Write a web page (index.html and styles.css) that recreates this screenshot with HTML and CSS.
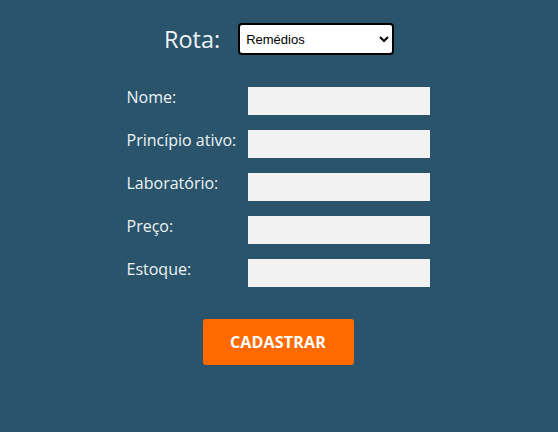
FILE: index.html
```html
<!DOCTYPE html>
<html lang="pt">
<head>
<meta charset="utf-8">
<link rel="stylesheet" href="styles.css">
</head>
<body>
<main class="page">
  <div class="route">
    <label class="route-label" for="rota">Rota:</label>
    <select id="rota" class="route-select">
      <option>Remédios</option>
    </select>
  </div>
  <form class="form">
    <div class="fields">
      <label class="field-label">Nome:</label><input class="field-input" type="text">
      <label class="field-label">Princípio ativo:</label><input class="field-input" type="text">
      <label class="field-label">Laboratório:</label><input class="field-input" type="text">
      <label class="field-label">Preço:</label><input class="field-input" type="text">
      <label class="field-label">Estoque:</label><input class="field-input" type="text">
    </div>
    <button class="submit" type="button">CADASTRAR</button>
  </form>
</main>
</body>
</html>
```
FILE: styles.css
```css
html, body {
  margin: 0;
  padding: 0;
  background: #2a546b;
  height: 100%;
}
body {
  font-family: "Open Sans", "DejaVu Sans", sans-serif;
  color: #f2f2f2;
}
.page {
  display: flex;
  flex-direction: column;
  align-items: center;
  padding-top: 23px;
}
.route {
  display: flex;
  align-items: center;
  gap: 18px;
}
.route-label {
  font-size: 23.5px;
  font-weight: 400;
  color: #eef3f5;
  line-height: 32px;
}
.route-select {
  width: 156px;
  height: 32px;
  box-sizing: border-box;
  border: 2px solid #000;
  border-radius: 4px;
  background: #fff;
  font-family: "Liberation Sans", Arial, sans-serif;
  font-size: 13px;
  color: #000;
  padding: 0 2px;
}
.form {
  display: flex;
  flex-direction: column;
  align-items: center;
  margin-top: 32px;
  margin-right: 2px;
}
.fields {
  display: grid;
  grid-template-columns: 121px 182px;
  row-gap: 15px;
}
.field-label {
  font-size: 16px;
  line-height: 20px;
  color: #eef3f5;
  padding-top: 0;
  white-space: nowrap;
}
.field-input {
  width: 182px;
  height: 28px;
  box-sizing: border-box;
  border: none;
  background: #f2f2f2;
  margin: 0;
}
.submit {
  margin-top: 32px;
  width: 151px;
  height: 46px;
  border: none;
  border-radius: 3px;
  background: #ff6a00;
  color: #fff;
  font-family: "Open Sans", sans-serif;
  font-weight: 700;
  font-size: 16px;
  letter-spacing: 0.2px;
}
```
